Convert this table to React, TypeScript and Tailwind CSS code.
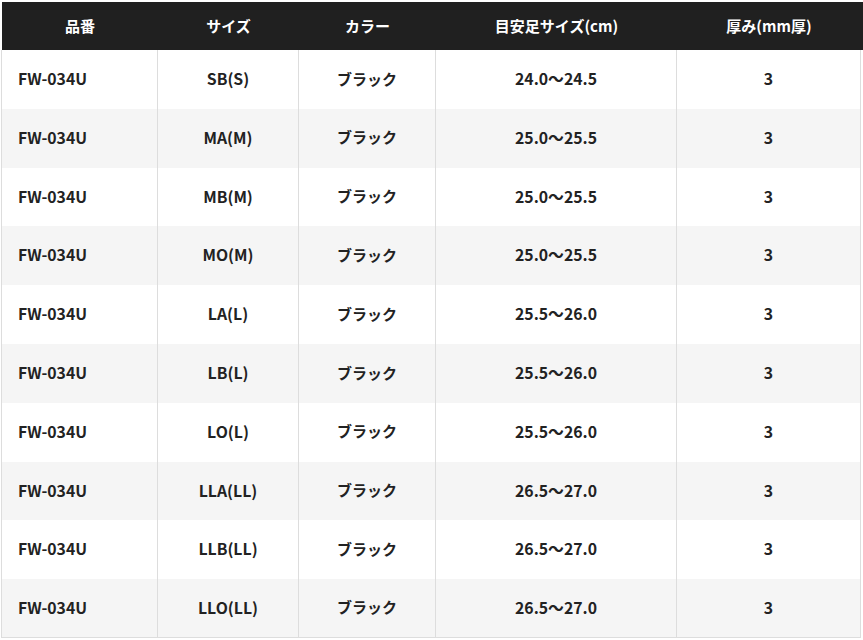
import React from 'react';

const rows = [
    { code: 'FW-034U', size: 'SB(S)', color: 'ブラック', foot: '24.0〜24.5', mm: '3' },
    { code: 'FW-034U', size: 'MA(M)', color: 'ブラック', foot: '25.0〜25.5', mm: '3' },
    { code: 'FW-034U', size: 'MB(M)', color: 'ブラック', foot: '25.0〜25.5', mm: '3' },
    { code: 'FW-034U', size: 'MO(M)', color: 'ブラック', foot: '25.0〜25.5', mm: '3' },
    { code: 'FW-034U', size: 'LA(L)', color: 'ブラック', foot: '25.5〜26.0', mm: '3' },
    { code: 'FW-034U', size: 'LB(L)', color: 'ブラック', foot: '25.5〜26.0', mm: '3' },
    { code: 'FW-034U', size: 'LO(L)', color: 'ブラック', foot: '25.5〜26.0', mm: '3' },
    { code: 'FW-034U', size: 'LLA(LL)', color: 'ブラック', foot: '26.5〜27.0', mm: '3' },
    { code: 'FW-034U', size: 'LLB(LL)', color: 'ブラック', foot: '26.5〜27.0', mm: '3' },
    { code: 'FW-034U', size: 'LLO(LL)', color: 'ブラック', foot: '26.5〜27.0', mm: '3' },
]

const headers = ['品番', 'サイズ', 'カラー', '目安足サイズ(cm)', '厚み(mm厚)']

export default function App() {
    return (
        <div className="bg-white pt-[2px] pl-px w-[863px] h-[640px] overflow-hidden font-bold text-[#222]"
            style={{ fontFamily: '"Noto Sans CJK JP", "Noto Sans", sans-serif' }}>
            {/* header */}
            <div className="flex h-[48px] bg-[#202020] text-white text-[15px] ml-px w-[861px]">
                <div className="w-[156px] flex items-center justify-center">{headers[0]}</div>
                <div className="w-[141px] flex items-center justify-center">{headers[1]}</div>
                <div className="w-[137px] flex items-center justify-center">{headers[2]}</div>
                <div className="w-[241px] flex items-center justify-center">{headers[3]}</div>
                <div className="flex-1 flex items-center justify-center pr-[2px]">{headers[4]}</div>
            </div>
            {/* body */}
            <div className="border-l border-[#dddddd] w-[860px] text-[15.8px]">
                {rows.map((r, i) => (
                    <div key={i} className={`flex h-[58.8px] ${i % 2 === 1 ? 'bg-[#f5f5f5]' : 'bg-white'} ${i === rows.length - 1 ? 'border-b border-[#dddddd]' : ''}`}>
                        <div className="w-[156px] shrink-0 flex items-center pl-[16px] pb-px border-r border-[#dddddd]">{r.code}</div>
                        <div className="w-[141px] shrink-0 flex items-center justify-center pb-px border-r border-[#dddddd]">{r.size}</div>
                        <div className="w-[137px] shrink-0 flex items-center justify-center pb-px text-[15px] border-r border-[#dddddd]">{r.color}</div>
                        <div className="w-[241px] shrink-0 flex items-center justify-center pb-px border-r border-[#dddddd]">{r.foot}</div>
                        <div className="flex-1 flex items-center justify-center pb-px border-r border-[#dddddd]">{r.mm}</div>
                    </div>
                ))}
            </div>
        </div>
    );
}
